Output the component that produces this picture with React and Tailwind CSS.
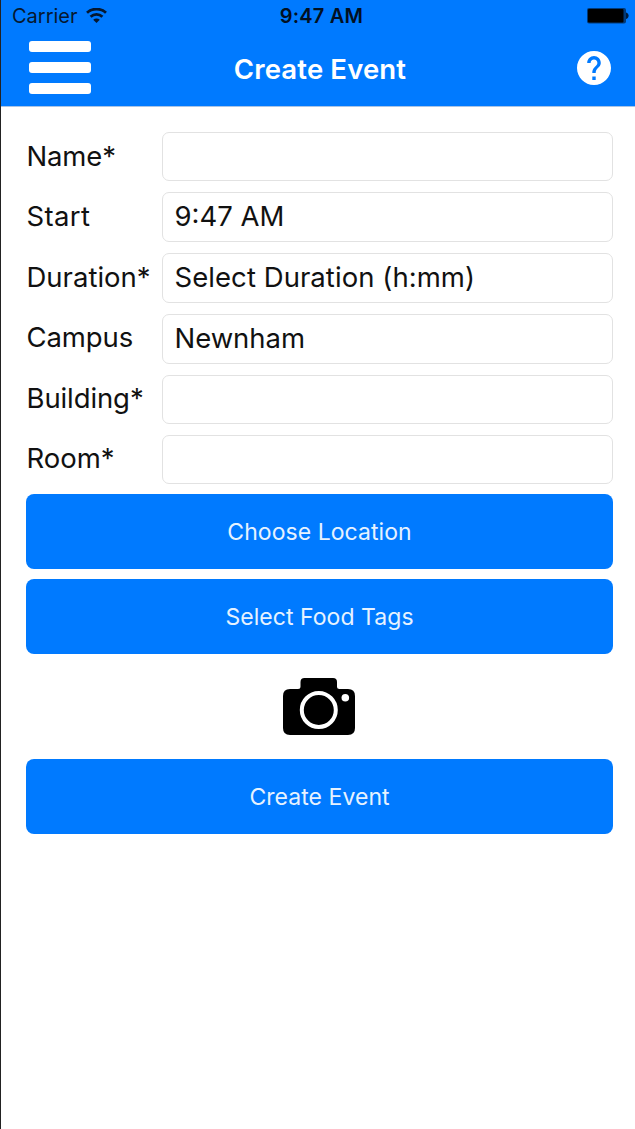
const rows = [
  { label: 'Name*', value: '', box: 'h-[49px] mb-[11px]', labelText: 'pb-[2px] tracking-[-0.15px]', valueText: '' },
  { label: 'Start', value: '9:47 AM', box: 'h-[50px] mb-[11px]', labelText: 'pb-[2px] tracking-[0.35px]', valueText: 'tracking-[0px]' },
  { label: 'Duration*', value: 'Select Duration (h:mm)', box: 'h-[50px] mb-[11px]', labelText: 'pb-[3px] tracking-[0px]', valueText: 'tracking-[0.06px]' },
  { label: 'Campus', value: 'Newnham', box: 'h-[50px] mb-[11px]', labelText: 'pb-[4px] tracking-[-0.1px]', valueText: 'tracking-[-0.05px]' },
  { label: 'Building*', value: '', box: 'h-[49px] mb-[11px]', labelText: 'pb-[4px] tracking-[-0.1px]', valueText: '' },
  { label: 'Room*', value: '', box: 'h-[49px]', labelText: 'pb-[4px] tracking-[0px]', valueText: '' },
];

function StatusBar() {
  return (
    <div className="grid h-8 grid-cols-3 items-center pl-[11px] pr-[6px] text-[20px] leading-8 text-[#06182f]">
      <div className="flex items-center gap-[8px]">
        <span>Carrier</span>
        <svg className="h-[16px] w-[21px]" viewBox="0 0 21 16" fill="none" stroke="currentColor" strokeWidth="2.8">
          <path d="M1 4.700C6.300-.1 14.700-.1 20 4.700" />
          <path d="M4.600 8.800c3.400-3.200 8.400-3.200 11.800 0" />
          <path d="M10.500 15 7.200 11.800c1.900-1.800 4.700-1.800 6.600 0z" fill="currentColor" stroke="none" />
        </svg>
      </div>
      <span className="pl-[2px] text-center font-semibold tracking-[0.2px] text-[#021022]">9:47 AM</span>
      <svg className="h-[18px] w-[43px] justify-self-end" viewBox="0 0 43 18">
        <rect x="1" y="1" width="39" height="15.500" rx="2" fill="#003a7a" />
        <rect x="2" y="2" width="35.500" height="13.500" rx="1" fill="#000" />
        <path d="M40 5.500c3.500.5 3.500 6 0 6.500z" fill="#001c3d" />
      </svg>
    </div>
  );
}

function Header() {
  return (
    <header className="h-[107px] border-b border-[#a9c4e6] bg-[#007aff]">
      <StatusBar />
      <div className="flex h-[72px] items-center justify-between pl-[28px] pr-[24px]">
        <button className="flex w-[62px] flex-col gap-[10px] pb-[2px]" aria-label="Menu">
          <span className="h-[11px] rounded-[3px] bg-white" />
          <span className="h-[11px] rounded-[3px] bg-white" />
          <span className="h-[11px] rounded-[3px] bg-white" />
        </button>
        <h1 className="pt-[2px] text-[27.5px] font-semibold leading-8 tracking-[0.15px] text-white">Create Event</h1>
        <button className="ml-[28px]" aria-label="Help">
          <svg className="block size-[34px]" viewBox="2 2 20 20" fill="white">
            <path d="M12 2C6.48 2 2 6.48 2 12s4.480 10 10 10 10-4.480 10-10S17.520 2 12 2zm1 17h-2v-2h2v2zm2.070-7.750l-.9.920C13.450 12.900 13 13.500 13 15h-2v-.5c0-1.100.45-2.100 1.170-2.830l1.240-1.260c.37-.36.59-.86.59-1.410 0-1.100-.9-2-2-2s-2 .9-2 2H8c0-2.210 1.790-4 4-4s4 1.790 4 4c0 .88-.36 1.680-.93 2.250z" />
          </svg>
        </button>
      </div>
    </header>
  );
}

function Field({ label, value, box, labelText, valueText }) {
  return (
    <div className={'flex items-center text-[27.5px] leading-8 text-[#111] ' + box}>
      <span className={'w-[136px] shrink-0 whitespace-nowrap pl-[0.5px] ' + labelText}>{label}</span>
      <div className="flex h-full flex-1 items-center rounded-[7px] border border-[#e2e2e2] pl-[11.5px]">
        <span className={'whitespace-nowrap pb-[2px] ' + valueText}>{value}</span>
      </div>
    </div>
  );
}

function BlueButton({ children }) {
  return (
    <button className="block h-[75px] w-full rounded-[8px] bg-[#007aff] pt-[2px] text-[23px] tracking-[0.05px] text-[#e6f2ff]">
      {children}
    </button>
  );
}

export default function App() {
  return (
    <div className="h-[1129px] w-full overflow-hidden border-l border-[#222] bg-white font-['Inter',sans-serif]">
      <Header />
      <main className="pl-[25px] pr-[22px] pt-[25px]">
        {rows.map((row) => (
          <Field key={row.label} {...row} />
        ))}
        <div className="mt-[10px] flex flex-col gap-[10px]">
          <BlueButton>Choose Location</BlueButton>
          <BlueButton>Select Food Tags</BlueButton>
        </div>
        <div className="flex h-[105px] items-center justify-center pr-[2px]">
          <svg className="h-[58px] w-[72px]" viewBox="0 0 72 58">
            <path d="M7 11h8q2.500 0 2.500-2.500V4q0-4 4-4H50q4 0 4 4v4.500Q54 11 56.500 11H65q7 0 7 7v32q0 7-7 7H7q-7 0-7-7V18q0-7 7-7z" />
            <circle cx="35.800" cy="32" r="17" fill="none" stroke="#fff" strokeWidth="4" />
            <circle cx="62.300" cy="19.800" r="3.800" fill="#fff" />
          </svg>
        </div>
        <BlueButton>Create Event</BlueButton>
      </main>
    </div>
  );
}
